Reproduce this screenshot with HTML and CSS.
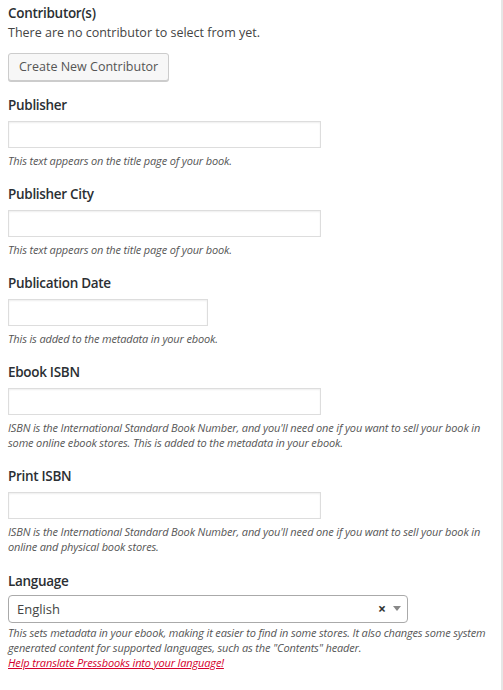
FILE: index.html
```html
<!DOCTYPE html>
<html>
<head>
<meta charset="utf-8">
<link rel="stylesheet" href="styles.css">
</head>
<body>
<div class="page">
  <section class="field field-first">
    <h3 class="label">Contributor(s)</h3>
    <p class="text">There are no contributor to select from yet.</p>
    <button class="button" type="button">Create New Contributor</button>
  </section>

  <section class="field">
    <label class="label">Publisher</label>
    <input class="input input-wide" type="text">
    <p class="desc">This text appears on the title page of your book.</p>
  </section>

  <section class="field">
    <label class="label">Publisher City</label>
    <input class="input input-wide" type="text">
    <p class="desc">This text appears on the title page of your book.</p>
  </section>

  <section class="field">
    <label class="label">Publication Date</label>
    <input class="input input-date" type="text">
    <p class="desc">This is added to the metadata in your ebook.</p>
  </section>

  <section class="field">
    <label class="label">Ebook ISBN</label>
    <input class="input input-wide" type="text">
    <p class="desc">ISBN is the International Standard Book Number, and you'll need one if you want to sell your book in some online ebook stores. This is added to the metadata in your ebook.</p>
  </section>

  <section class="field field-print">
    <label class="label">Print ISBN</label>
    <input class="input input-wide" type="text">
    <p class="desc">ISBN is the International Standard Book Number, and you'll need one if you want to sell your book in online and physical book stores.</p>
  </section>

  <section class="field">
    <label class="label">Language</label>
    <div class="select">
      <span class="select-value">English</span>
      <span class="select-clear">×</span>
      <span class="select-arrow"></span>
    </div>
    <p class="desc desc-tight">This sets metadata in your ebook, making it easier to find in some stores. It also changes some system generated content for supported languages, such as the "Contents" header.<br><a class="link" href="#">Help translate Pressbooks into your language!</a></p>
  </section>
</div>
</body>
</html>
```

FILE: styles.css
```css
* { box-sizing: border-box; }
html, body { margin: 0; padding: 0; background: #fff; }
body {
  font-family: "Open Sans", "Noto Sans", sans-serif;
  color: #444;
  font-size: 12.5px;
}
.page {
  width: 503px;
  min-height: 690px;
  padding: 3px 0 0 8px;
  border-right: 2px solid #e6e6e6;
}
.field { margin: 0 0 16px 0; }
.field-print { margin-bottom: 17px; }
.label {
  display: block;
  margin: 0 0 6px 0;
  font-size: 13.5px;
  line-height: 20px;
  font-weight: 600;
  letter-spacing: -0.3px;
  color: #2b2f33;
}
.field-first .label { margin-bottom: 0; }
.text {
  margin: 0 0 10px 0;
  line-height: 20px;
  font-size: 12.5px;
}
.button {
  display: block;
  height: 28px;
  padding: 0 10px 1px;
  font-family: inherit;
  font-size: 12.5px;
  color: #555;
  background: #f7f7f7;
  border: 1px solid #ccc;
  border-radius: 3px;
  box-shadow: 0 1px 0 #ccc;
}
.field-first { margin-bottom: 14px; }
.input {
  display: block;
  height: 27px;
  margin: 0;
  padding: 3px 5px;
  border: 1px solid #ddd;
  box-shadow: inset 0 1px 2px rgba(0,0,0,0.07);
  background: #fff;
  font-family: inherit;
  font-size: 13px;
}
.input-wide { width: 313px; }
.input-date { width: 200px; }
.desc {
  margin: 5px 0 0 0;
  font-size: 11px;
  letter-spacing: -0.15px;
  line-height: 15px;
  font-style: italic;
  color: #555;
  max-width: 485px;
}
.desc-tight { margin-top: 2px; }
.select {
  display: flex;
  align-items: center;
  width: 400px;
  height: 28px;
  margin-top: -2px;
  border: 1px solid #aaa;
  border-radius: 4px;
  background: #fff;
  padding: 0 6px 0 8px;
}
.select-value {
  flex: 1;
  font-size: 13px;
  color: #444;
}
.select-clear {
  font-size: 14px;
  font-weight: 700;
  color: #333;
  margin-right: 7px;
  line-height: 1;
}
.select-arrow {
  width: 0;
  height: 0;
  border-left: 4px solid transparent;
  border-right: 4px solid transparent;
  border-top: 5px solid #888;
  margin-top: -2px;
}
.link {
  color: #d4002d;
  text-decoration: underline;
}
```
